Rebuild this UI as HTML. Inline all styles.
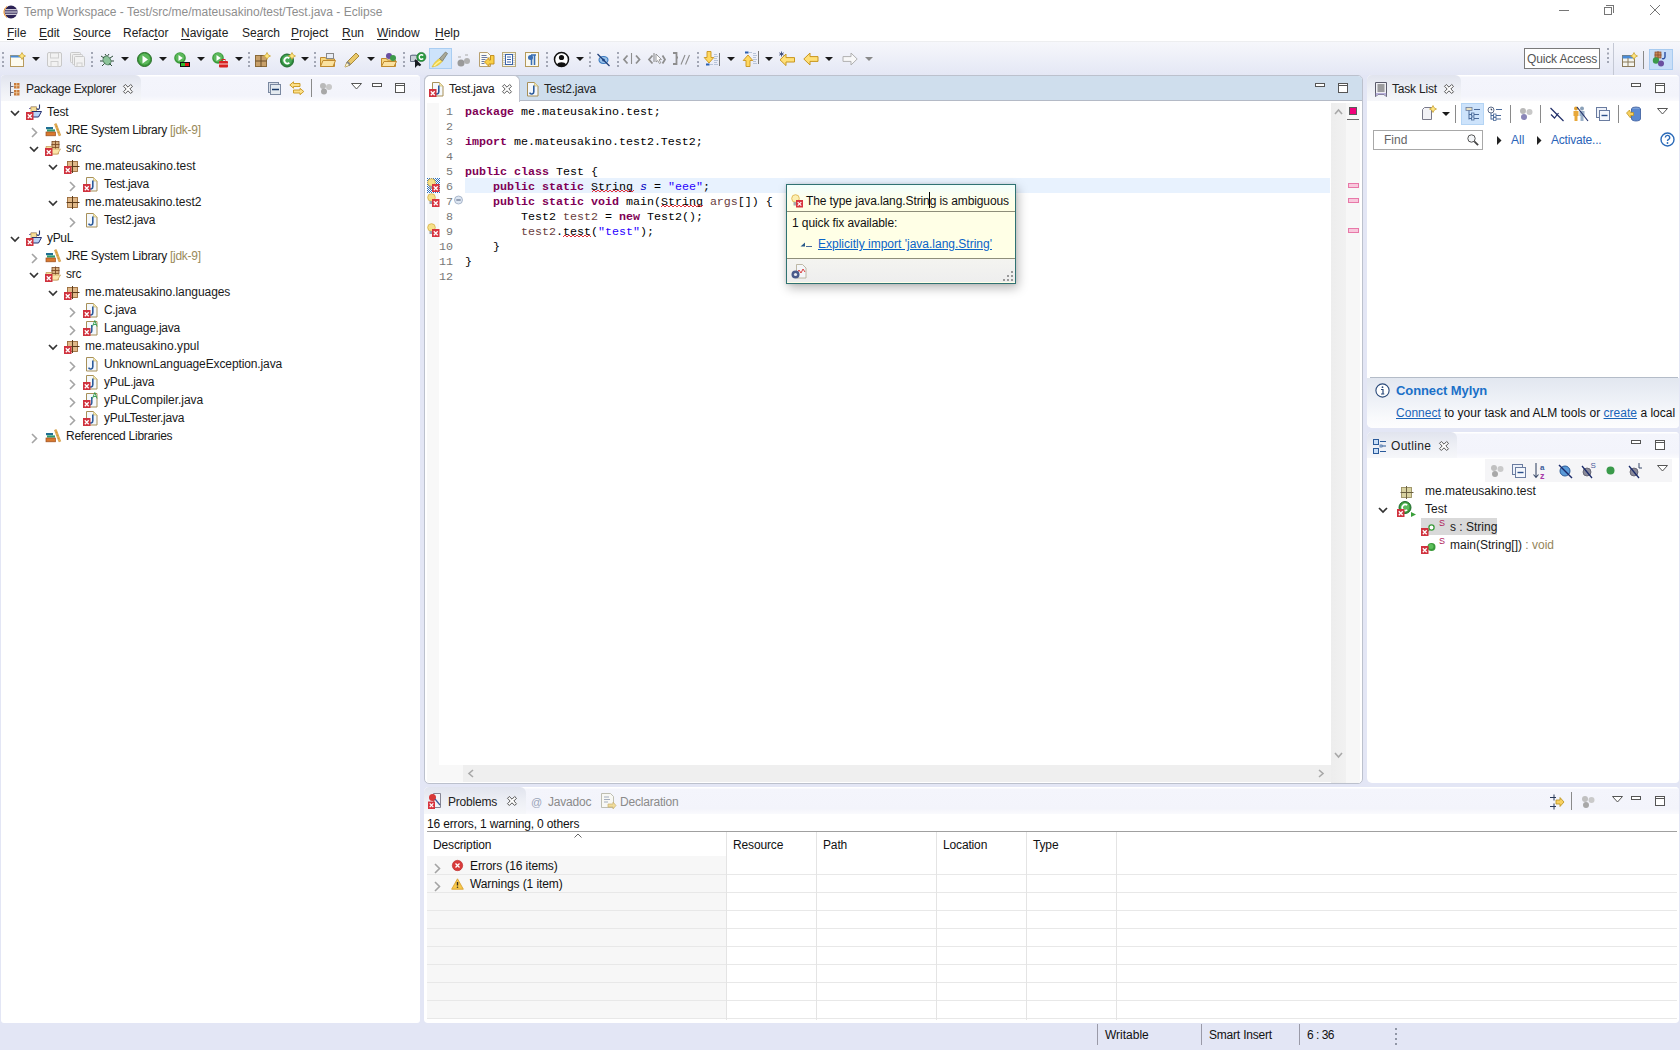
<!DOCTYPE html>
<html><head><meta charset="utf-8">
<style>
html,body{margin:0;padding:0}
body{width:1680px;height:1050px;position:relative;overflow:hidden;background:#E3E6F5;font-family:"Liberation Sans",sans-serif;font-size:12px;color:#000}
.a{position:absolute}
.t{position:absolute;white-space:nowrap;line-height:14px}
.m{font-family:"Liberation Mono",monospace;font-size:11.67px;white-space:pre;position:absolute;line-height:15px}
u{text-decoration:none;border-bottom:1px solid currentColor}
svg{position:absolute;overflow:visible}
</style></head><body>
<!-- TITLE + MENU -->
<div class="a" style="left:0;top:0;width:1680px;height:41px;background:#fff"></div>
<div class="a" style="left:0;top:41px;width:1680px;height:1px;background:#EDEEF0"></div>
<div class="a" style="left:0;top:42px;width:1680px;height:33px;background:linear-gradient(#F6F7FB,#E4E7F5)"></div>
<svg style="left:4px;top:5px" width="14" height="14" viewBox="0 0 14 14"><circle cx="7" cy="7" r="6.5" fill="#2C2255"/><path d="M1.2 4.8h11.6M1 7h12M1.2 9.2h11.6" stroke="#fff" stroke-width="1.1"/><path d="M3 1.5A6.5 6.5 0 0 0 3 12.5" stroke="#F7941E" stroke-width="1" fill="none"/></svg>
<div class="t" style="left:24px;top:5px;color:#8E8E8E;font-size:12px">Temp Workspace - Test/src/me/mateusakino/test/Test.java - Eclipse</div>
<div class="a" style="left:1559px;top:10px;width:10px;height:1px;background:#767676"></div>
<div class="a" style="left:1606px;top:5px;width:7px;height:7px;border-top:1px solid #767676;border-right:1px solid #767676"></div>
<div class="a" style="left:1604px;top:7px;width:6px;height:6px;border:1px solid #767676;background:#fff"></div>
<svg style="left:1650px;top:5px" width="10" height="10"><path d="M0 0L10 10M10 0L0 10" stroke="#767676" stroke-width="1"/></svg>
<div class="t" style="left:7px;top:26px;color:#222"><span style="border-bottom:1px solid #222;line-height:11px;display:inline-block">F</span>ile</div>
<div class="t" style="left:39px;top:26px;color:#222"><span style="border-bottom:1px solid #222;line-height:11px;display:inline-block">E</span>dit</div>
<div class="t" style="left:73px;top:26px;color:#222"><span style="border-bottom:1px solid #222;line-height:11px;display:inline-block">S</span>ource</div>
<div class="t" style="left:123px;top:26px;color:#222">Refac<span style="border-bottom:1px solid #222;line-height:11px;display:inline-block">t</span>or</div>
<div class="t" style="left:181px;top:26px;color:#222"><span style="border-bottom:1px solid #222;line-height:11px;display:inline-block">N</span>avigate</div>
<div class="t" style="left:242px;top:26px;color:#222">Se<span style="border-bottom:1px solid #222;line-height:11px;display:inline-block">a</span>rch</div>
<div class="t" style="left:291px;top:26px;color:#222"><span style="border-bottom:1px solid #222;line-height:11px;display:inline-block">P</span>roject</div>
<div class="t" style="left:342px;top:26px;color:#222"><span style="border-bottom:1px solid #222;line-height:11px;display:inline-block">R</span>un</div>
<div class="t" style="left:377px;top:26px;color:#222"><span style="border-bottom:1px solid #222;line-height:11px;display:inline-block">W</span>indow</div>
<div class="t" style="left:435px;top:26px;color:#222"><span style="border-bottom:1px solid #222;line-height:11px;display:inline-block">H</span>elp</div>
<svg style="left:2px;top:52px" width="2" height="15"><rect x="0" y="0" width="2" height="2" fill="#A2A6B4"/><rect x="0" y="4.5" width="2" height="2" fill="#A2A6B4"/><rect x="0" y="9" width="2" height="2" fill="#A2A6B4"/><rect x="0" y="13" width="2" height="2" fill="#A2A6B4"/></svg>
<svg style="left:10px;top:52px" width="16" height="16" viewBox="0 0 16 16"><rect x="0.5" y="3.5" width="13" height="11" fill="#FDFBF0" stroke="#B89B5E"/><rect x="0.5" y="3.5" width="13" height="2" fill="#4A8BD6"/><path d="M12 0.5l1.2 2.3 2.3 1.2-2.3 1.2L12 7.5l-1.2-2.3-2.3-1.2 2.3-1.2z" fill="#FFE680" stroke="#C9A33A" stroke-width="0.8"/></svg>
<svg style="left:32px;top:57px" width="8" height="4"><path d="M0 0H8L4 4Z" fill="#1a1a1a"/></svg>
<svg style="left:47px;top:52px" width="16" height="16" viewBox="0 0 16 16"><rect x="0.5" y="0.5" width="14" height="14" rx="1.5" fill="#F2F2F2" stroke="#C8C8C8"/><rect x="3.5" y="1" width="8" height="5" fill="none" stroke="#CFCFCF"/><rect x="4" y="9.5" width="7" height="5" fill="none" stroke="#CFCFCF"/></svg>
<svg style="left:70px;top:52px" width="16" height="16" viewBox="0 0 16 16"><rect x="0.5" y="0.5" width="10" height="10" rx="1" fill="#F0F0F0" stroke="#CACACA"/><rect x="2.5" y="2.5" width="10" height="10" rx="1" fill="#F0F0F0" stroke="#CACACA"/><rect x="4.5" y="4.5" width="10" height="10" rx="1" fill="#F2F2F2" stroke="#C8C8C8"/><rect x="7" y="11" width="5" height="3.5" fill="none" stroke="#CFCFCF"/></svg>
<svg style="left:91px;top:52px" width="2" height="15"><rect x="0" y="0" width="2" height="2" fill="#A2A6B4"/><rect x="0" y="4.5" width="2" height="2" fill="#A2A6B4"/><rect x="0" y="9" width="2" height="2" fill="#A2A6B4"/><rect x="0" y="13" width="2" height="2" fill="#A2A6B4"/></svg>
<svg style="left:99px;top:52px" width="16" height="16" viewBox="0 0 16 16"><ellipse cx="8" cy="8.5" rx="3.6" ry="4.6" fill="#8CC49A" stroke="#4E7F5C" transform="rotate(-35 8 8.5)"/><path d="M2 4l3 2M1 9h3M3 14l2.5-2.5M14 4l-3 2M15 9h-3M13 14l-2.5-2.5M6 2l1.5 2M10 2L8.5 4" stroke="#2F4F3A" stroke-width="1"/></svg>
<svg style="left:121px;top:57px" width="8" height="4"><path d="M0 0H8L4 4Z" fill="#1a1a1a"/></svg>
<svg style="left:137px;top:52px" width="16" height="16" viewBox="0 0 16 16"><circle cx="7.5" cy="7.5" r="7" fill="#3A9A3A" stroke="#2A6E2A"/><circle cx="7.5" cy="7" r="5.5" fill="#5CB85C"/><path d="M5.5 3.5L11 7.5 5.5 11.5z" fill="#fff"/></svg>
<svg style="left:159px;top:57px" width="8" height="4"><path d="M0 0H8L4 4Z" fill="#1a1a1a"/></svg>
<svg style="left:174px;top:52px" width="16" height="16" viewBox="0 0 16 16"><circle cx="6" cy="6" r="5.8" fill="#3A9A3A"/><circle cx="6" cy="5.5" r="4.5" fill="#5CB85C"/><path d="M4.5 3L8.8 6 4.5 9z" fill="#fff"/><rect x="6" y="10" width="10" height="5" fill="#111"/><rect x="7" y="11" width="4" height="3" fill="#2DBB2D"/><rect x="11" y="11" width="4" height="3" fill="#D11"/></svg>
<svg style="left:197px;top:57px" width="8" height="4"><path d="M0 0H8L4 4Z" fill="#1a1a1a"/></svg>
<svg style="left:212px;top:52px" width="16" height="16" viewBox="0 0 16 16"><circle cx="6" cy="6" r="5.8" fill="#3A9A3A"/><circle cx="6" cy="5.5" r="4.5" fill="#5CB85C"/><path d="M4.5 3L8.8 6 4.5 9z" fill="#fff"/><rect x="7" y="9" width="9" height="6.5" rx="1" fill="#D82222"/><path d="M7 12h9" stroke="#fff" stroke-width="0.8"/><rect x="10" y="7.5" width="3" height="2" fill="none" stroke="#D82222"/></svg>
<svg style="left:235px;top:57px" width="8" height="4"><path d="M0 0H8L4 4Z" fill="#1a1a1a"/></svg>
<svg style="left:248px;top:52px" width="2" height="15"><rect x="0" y="0" width="2" height="2" fill="#A2A6B4"/><rect x="0" y="4.5" width="2" height="2" fill="#A2A6B4"/><rect x="0" y="9" width="2" height="2" fill="#A2A6B4"/><rect x="0" y="13" width="2" height="2" fill="#A2A6B4"/></svg>
<svg style="left:255px;top:52px" width="16" height="16" viewBox="0 0 16 16"><rect x="0.5" y="3.5" width="11" height="11" fill="#C8A06A" stroke="#8A6A3A"/><path d="M6 3v12M0.5 9h11" stroke="#6B4E2A"/><path d="M12 0.5l1.2 2.3 2.3 1.2-2.3 1.2L12 7.5l-1.2-2.3-2.3-1.2 2.3-1.2z" fill="#FFE680" stroke="#C9A33A" stroke-width="0.8"/></svg>
<svg style="left:280px;top:52px" width="16" height="16" viewBox="0 0 16 16"><circle cx="7" cy="8.5" r="6.5" fill="#2E8B3E" stroke="#1F6A2C"/><circle cx="7" cy="8" r="5" fill="#47A957"/><path d="M9.3 6.2A3 3 0 1 0 9.3 10.8" stroke="#fff" stroke-width="1.8" fill="none"/><path d="M12 0.5l1.2 2.3 2.3 1.2-2.3 1.2L12 7.5l-1.2-2.3-2.3-1.2 2.3-1.2z" fill="#FFE680" stroke="#C9A33A" stroke-width="0.8"/></svg>
<svg style="left:301px;top:57px" width="8" height="4"><path d="M0 0H8L4 4Z" fill="#1a1a1a"/></svg>
<svg style="left:314px;top:52px" width="2" height="15"><rect x="0" y="0" width="2" height="2" fill="#A2A6B4"/><rect x="0" y="4.5" width="2" height="2" fill="#A2A6B4"/><rect x="0" y="9" width="2" height="2" fill="#A2A6B4"/><rect x="0" y="13" width="2" height="2" fill="#A2A6B4"/></svg>
<svg style="left:320px;top:52px" width="16" height="16" viewBox="0 0 16 16"><path d="M0.5 5.5h5l1 1.5h8v7.5h-14z" fill="#F7D77E" stroke="#C08A2E"/><rect x="6.5" y="1.5" width="7" height="5" fill="#E8ECF4" stroke="#888"/><path d="M0.5 14.5L3 8.5h12.5L13 14.5z" fill="#FBE2A0" stroke="#C08A2E"/></svg>
<svg style="left:344px;top:52px" width="16" height="16" viewBox="0 0 16 16"><path d="M1 15l2-5 9-9 3 3-9 9z" fill="#E9C86A" stroke="#A8893A"/><path d="M3 10l3 3" stroke="#888" stroke-width="2.5"/><path d="M1 15l2-4 2 2z" fill="#FFF8D0"/></svg>
<svg style="left:367px;top:57px" width="8" height="4"><path d="M0 0H8L4 4Z" fill="#1a1a1a"/></svg>
<svg style="left:381px;top:52px" width="16" height="16" viewBox="0 0 16 16"><path d="M0.5 6.5h5l1 1.5h8v6.5h-14z" fill="#F7D77E" stroke="#C08A2E"/><path d="M0.5 14.5L3 9.5h12.5L13 14.5z" fill="#FBE2A0" stroke="#C08A2E"/><circle cx="8" cy="4" r="3" fill="#6A4FA0"/><circle cx="12" cy="6" r="3" fill="#3C9A4A"/></svg>
<svg style="left:403px;top:52px" width="2" height="15"><rect x="0" y="0" width="2" height="2" fill="#A2A6B4"/><rect x="0" y="4.5" width="2" height="2" fill="#A2A6B4"/><rect x="0" y="9" width="2" height="2" fill="#A2A6B4"/><rect x="0" y="13" width="2" height="2" fill="#A2A6B4"/></svg>
<svg style="left:410px;top:52px" width="16" height="16" viewBox="0 0 16 16"><path d="M0.5 3.5h7v6h-7z" fill="#C8CED8" stroke="#6A7488"/><path d="M1.5 2.5h5v1h-5z" fill="#8A94A8"/><path d="M5 7.5v8.5l2.3-2.6 3.2-0.2z" fill="#151A20"/><path d="M5 8l5.5 5.5" stroke="#151A20" stroke-width="2.2"/><circle cx="11.3" cy="5" r="4.6" fill="#2A9A40" stroke="#1F6A2C" stroke-width="0.6"/><path d="M13.2 3.4A2.3 2.3 0 1 0 13.2 6.6" stroke="#fff" stroke-width="1.4" fill="none"/></svg>
<div class="a" style="left:429px;top:48px;width:21px;height:19px;background:#CDE3FB;border:1px solid #A9CDF2"></div>
<svg style="left:431px;top:51px" width="18" height="17" viewBox="0 0 18 17"><path d="M1 16c1.5-3 3.5-6 7.5-8.5l3 2.5c-2.5 3.5-6 5.5-10.5 6z" fill="#F2D64A" stroke="#D8B830" stroke-width="0.6"/><path d="M3 15c2-2 4-4 6.5-5" stroke="#FFF2A0" stroke-width="1.2" fill="none"/><path d="M8.5 7.5L14.5 1l2 1.5-5 7.5z" fill="#A8A898" stroke="#707062" stroke-width="0.7"/></svg>
<svg style="left:457px;top:52px" width="16" height="16" viewBox="0 0 16 16"><circle cx="4" cy="11" r="3.5" fill="#9A9A9A"/><circle cx="10" cy="9" r="3" fill="#B0B0B0"/><path d="M1 5h3M8 3h3" stroke="#AAA"/></svg>
<svg style="left:479px;top:52px" width="16" height="16" viewBox="0 0 16 16"><path d="M0.5 0.5h8l3 3v11h-11z" fill="#FBFBF4" stroke="#B8A070"/><path d="M2.5 3.5h5M2.5 5.5h6M2.5 7.5h4M2.5 9.5h3M2.5 11.5h3" stroke="#5A6A98" stroke-width="0.9"/><path d="M11.5 3.5h3.5v8.5H10v2.5L5.5 10 10 5.5V8h1.5z" fill="#FAD048" stroke="#C08A1A" stroke-width="0.9"/></svg>
<svg style="left:502px;top:52px" width="16" height="16" viewBox="0 0 16 16"><rect x="0.5" y="0.5" width="13" height="14" fill="#F6F6EC" stroke="#B8A878"/><path d="M2 2v11M12 2v11" stroke="#A8A8A8" stroke-dasharray="1 1"/><rect x="3.5" y="2.5" width="7" height="10" fill="#fff" stroke="#3A62A8"/><path d="M5 5h4M5 7.5h4M5 10h4" stroke="#3A62A8"/></svg>
<svg style="left:525px;top:52px" width="16" height="16" viewBox="0 0 16 16"><rect x="0.5" y="0.5" width="13" height="14" fill="#FAF9F0" stroke="#B59A5A"/><path d="M6 3h5M6.5 3v10M9.5 3v10" stroke="#3A6FB5" stroke-width="1.6"/><circle cx="5.5" cy="5.5" r="2.5" fill="#3A6FB5"/></svg>
<svg style="left:546px;top:52px" width="2" height="15"><rect x="0" y="0" width="2" height="2" fill="#A2A6B4"/><rect x="0" y="4.5" width="2" height="2" fill="#A2A6B4"/><rect x="0" y="9" width="2" height="2" fill="#A2A6B4"/><rect x="0" y="13" width="2" height="2" fill="#A2A6B4"/></svg>
<svg style="left:554px;top:52px" width="16" height="16" viewBox="0 0 16 16"><circle cx="7.5" cy="7.5" r="7" fill="#fff" stroke="#111" stroke-width="1.5"/><circle cx="7.5" cy="5.5" r="2.6" fill="#111"/><path d="M3 12.5c1-3 8-3 9 0a6 6 0 0 1-9 0z" fill="#111"/></svg>
<svg style="left:576px;top:57px" width="8" height="4"><path d="M0 0H8L4 4Z" fill="#1a1a1a"/></svg>
<svg style="left:589px;top:52px" width="2" height="15"><rect x="0" y="0" width="2" height="2" fill="#A2A6B4"/><rect x="0" y="4.5" width="2" height="2" fill="#A2A6B4"/><rect x="0" y="9" width="2" height="2" fill="#A2A6B4"/><rect x="0" y="13" width="2" height="2" fill="#A2A6B4"/></svg>
<svg style="left:597px;top:52px" width="16" height="16" viewBox="0 0 16 16"><ellipse cx="6.5" cy="8" rx="4.5" ry="3.5" fill="#9CC4EA" stroke="#3A7AC0" stroke-width="1.1"/><circle cx="6.5" cy="8" r="1.5" fill="#2A5AA0"/><path d="M0.5 2L12.5 14" stroke="#1E3E78" stroke-width="1.2"/></svg>
<svg style="left:617px;top:52px" width="2" height="15"><rect x="0" y="0" width="2" height="2" fill="#A2A6B4"/><rect x="0" y="4.5" width="2" height="2" fill="#A2A6B4"/><rect x="0" y="9" width="2" height="2" fill="#A2A6B4"/><rect x="0" y="13" width="2" height="2" fill="#A2A6B4"/></svg>
<svg style="left:622px;top:52px" width="19" height="13" viewBox="0 0 19 13"><path d="M5.5 3.5L2 7.5 5.5 11.5" stroke="#8E8E8E" stroke-width="1.8" fill="none"/><path d="M9.5 1v11" stroke="#8E8E8E" stroke-width="1.1"/><path d="M14 3.5l3.5 4-3.5 4" stroke="#8E8E8E" stroke-width="1.8" fill="none"/></svg>
<svg style="left:647px;top:52px" width="19" height="14" viewBox="0 0 19 14"><path d="M5.5 3.5L2 7.5 5.5 11.5" stroke="#8E8E8E" stroke-width="1.8" fill="none"/><path d="M7 1v9" stroke="#8E8E8E" stroke-width="1.1"/><path d="M9 2l5.5 5.5-2.5 0.3 1.8 3-1.3.8-1.8-3L9 10z" fill="#fff" stroke="#8E8E8E" stroke-width="0.9"/><path d="M15.5 3.5l2.5 4-2.5 4" stroke="#8E8E8E" stroke-width="1.8" fill="none"/></svg>
<svg style="left:672px;top:52px" width="19" height="14" viewBox="0 0 19 14"><path d="M1 1h3.5v4.5h1.5M4.5 5.5v6.5H1" stroke="#8E8E8E" stroke-width="1.8" fill="none"/><path d="M9 12.5L13 3M13.5 12.5L17.5 3" stroke="#8E8E8E" stroke-width="1.1"/></svg>
<svg style="left:697px;top:52px" width="2" height="15"><rect x="0" y="0" width="2" height="2" fill="#A2A6B4"/><rect x="0" y="4.5" width="2" height="2" fill="#A2A6B4"/><rect x="0" y="9" width="2" height="2" fill="#A2A6B4"/><rect x="0" y="13" width="2" height="2" fill="#A2A6B4"/></svg>
<svg style="left:704px;top:51px" width="17" height="17" viewBox="0 0 17 17"><path d="M10 3.5h3M10 5.5h4M10 7.5h3M10 9.5h4M10 11.5h3M10 13.5h4" stroke="#B8C4D8" stroke-width="1"/><path d="M15.5 2v13" stroke="#7A7A7A" stroke-width="1"/><path d="M3 0.5h4v6h2.8L5 12 0.2 6.5H3z" fill="#FFD860" stroke="#C8941E" stroke-width="0.9"/><rect x="2" y="12.5" width="3.5" height="2" fill="#2A5FAF"/><path d="M6 13.5h3" stroke="#B8C4D8"/></svg>
<svg style="left:727px;top:57px" width="8" height="4"><path d="M0 0H8L4 4Z" fill="#1a1a1a"/></svg>
<svg style="left:743px;top:50px" width="17" height="17" viewBox="0 0 17 17"><path d="M10 3.5h3M10 5.5h4M10 7.5h3M10 9.5h4M10 11.5h3M10 13.5h4" stroke="#B8C4D8" stroke-width="1"/><path d="M15.5 1v13" stroke="#7A7A7A" stroke-width="1"/><path d="M3 16.5h4v-6h2.8L5 5 0.2 10.5H3z" fill="#FFD860" stroke="#C8941E" stroke-width="0.9"/><rect x="2" y="1.5" width="3.5" height="2" fill="#2A5FAF"/><path d="M6 2.5h3" stroke="#B8C4D8"/></svg>
<svg style="left:765px;top:57px" width="8" height="4"><path d="M0 0H8L4 4Z" fill="#1a1a1a"/></svg>
<svg style="left:779px;top:51px" width="17" height="16" viewBox="0 0 17 16"><path d="M7 3L1 8.8l6 5.8v-3.6h8.5V6.6H7z" fill="#FFE078" stroke="#C8961E" stroke-width="1"/><path d="M2.5 0.5v5M0.3 1.8l4.4 2.4M0.3 4.2l4.4-2.4" stroke="#3A4A78" stroke-width="0.9"/></svg>
<svg style="left:803px;top:51px" width="17" height="16" viewBox="0 0 17 16"><path d="M7 2L0.8 8l6.2 6v-3.6h8V5.6h-8z" fill="#FFE078" stroke="#C8961E" stroke-width="1"/></svg>
<svg style="left:825px;top:57px" width="8" height="4"><path d="M0 0H8L4 4Z" fill="#1a1a1a"/></svg>
<svg style="left:842px;top:51px" width="17" height="16" viewBox="0 0 17 16"><path d="M9 2L15.2 8 9 14v-3.6H1V5.6h8z" fill="#F8F8F8" stroke="#B0B0B0" stroke-width="1"/></svg>
<svg style="left:865px;top:57px" width="8" height="4"><path d="M0 0H8L4 4Z" fill="#8A8A8A"/></svg>
<div class="a" style="left:1524px;top:48px;width:74px;height:19px;border:1px solid #7A7A7A;background:#fff"></div>
<div class="t" style="left:1527px;top:52px;color:#555;font-size:12px;letter-spacing:-0.15px">Quick Access</div>
<svg style="left:1607px;top:48px" width="2" height="15"><rect x="0" y="0" width="2" height="2" fill="#A2A6B4"/><rect x="0" y="4.5" width="2" height="2" fill="#A2A6B4"/><rect x="0" y="9" width="2" height="2" fill="#A2A6B4"/><rect x="0" y="13" width="2" height="2" fill="#A2A6B4"/></svg>
<div class="a" style="left:1613px;top:43px;width:1px;height:32px;background:#C4C8D4"></div>
<svg style="left:1622px;top:52px" width="16" height="16" viewBox="0 0 16 16"><rect x="0.5" y="3.5" width="12" height="11" fill="#F4F4EE" stroke="#8A7A5A"/><rect x="0.5" y="3.5" width="12" height="3" fill="#4A8BD6"/><path d="M0.5 10h12M6 6v8.5" stroke="#8A7A5A"/><path d="M12 0.5l1.2 2.3 2.3 1.2-2.3 1.2L12 7.5l-1.2-2.3-2.3-1.2 2.3-1.2z" fill="#FFE680" stroke="#C9A33A" stroke-width="0.8"/></svg>
<div class="a" style="left:1643px;top:51px;width:1px;height:18px;background:#8A8A8A"></div>
<div class="a" style="left:1649px;top:49px;width:22px;height:19px;background:#C8DEF8;border:1px solid #A8CBF0"></div>
<svg style="left:1652px;top:51px" width="16" height="16" viewBox="0 0 16 16"><rect x="3" y="1" width="6" height="6" fill="#C88A5A" stroke="#8A4A2A" stroke-width="0.7"/><path d="M6 0v8M2.5 4h7" stroke="#8A4A2A" stroke-width="0.8"/><path d="M13 1v5a2 2 0 0 1-3 1.5" stroke="#2A4FA0" stroke-width="1.4" fill="none"/><circle cx="4" cy="9.5" r="3.2" fill="#3C9A4A"/><circle cx="9" cy="12.5" r="3" fill="#6A4FA0"/></svg>
<div class="a" style="left:1px;top:75px;width:419px;height:948px;background:#fff;border-radius:4px 4px 3px 3px"></div>
<div class="a" style="left:1px;top:75px;width:419px;height:26px;background:linear-gradient(#FFFFFF 0,#FFFFFF 1px,#F4F5FC 2px,#F3F4FB 80%,#FAFAFD);border-radius:4px 4px 0 0"></div>
<div class="a" style="left:1px;top:75px;width:140px;height:26px;background:linear-gradient(#E1E4EE,#EDEFF5 50%,#F6F7FA);border-radius:4px 6px 0 0"></div>
<svg style="left:10px;top:82px" width="10" height="14" viewBox="0 0 10 14"><path d="M0.5 0v14" stroke="#6A6A78"/><path d="M0.5 4.5h3M0.5 10.5h3" stroke="#6A6A78"/><rect x="4" y="1" width="5.5" height="5.5" fill="#C87A3A"/><rect x="4" y="8" width="5.5" height="5.5" fill="#C87A3A"/><path d="M6.7 1v5.5M4 3.7h5.5M6.7 8v5.5M4 10.7h5.5" stroke="#F3D8B0" stroke-width="0.7"/></svg>
<div class="t" style="left:26px;top:82px;color:#222;letter-spacing:-0.3px">Package Explorer</div>
<svg style="left:123px;top:84px" width="10" height="10" viewBox="0 0 10 10"><path d="M0.5 2.3L2.3 0.5 5 3.2 7.7 0.5 9.5 2.3 6.8 5 9.5 7.7 7.7 9.5 5 6.8 2.3 9.5 0.5 7.7 3.2 5z" fill="#fff" stroke="#555" stroke-width="1" stroke-linejoin="miter"/></svg>
<svg style="left:268px;top:82px" width="14" height="14" viewBox="0 0 14 14"><rect x="0.5" y="0.5" width="10" height="10" fill="#D8DEE8" stroke="#7A88A0"/><rect x="2.5" y="2.5" width="10" height="10" fill="#E4EAF0" stroke="#7A88A0"/><path d="M4 7.5h7" stroke="#1A3A6A" stroke-width="1.5"/></svg>
<svg style="left:289px;top:81px" width="16" height="16" viewBox="0 0 16 16"><path d="M4.5 0.8L0.8 4 4.5 7.2V5.5h6.5v-3H4.5z" fill="#FCE08A" stroke="#C8961E" stroke-width="0.9"/><path d="M11 7.3l3.8 3.2-3.8 3.2V12H4.5V9H11z" fill="#FCE08A" stroke="#C8961E" stroke-width="0.9"/></svg>
<div class="a" style="left:311px;top:79px;width:1px;height:18px;background:#8A8A8A"></div>
<svg style="left:319px;top:82px" width="14" height="13" viewBox="0 0 14 13"><circle cx="4" cy="4" r="3" fill="#B9B9B9"/><circle cx="10" cy="5" r="3" fill="#C8C8C8"/><circle cx="5" cy="9.5" r="3" fill="#A8A8A8"/></svg>
<svg style="left:351px;top:83px" width="11" height="7"><path d="M0.5 0.5h10L5.5 6z" fill="#fff" stroke="#555"/></svg>
<div class="a" style="left:372px;top:83px;width:8px;height:2px;border:1px solid #555;background:#fff"></div>
<div class="a" style="left:395px;top:83px;width:8px;height:8px;border:1px solid #555;background:#fff"></div>
<div class="a" style="left:396px;top:85px;width:8px;height:1px;background:#555"></div>
<div class="a" style="left:424px;top:75px;width:937px;height:707px;background:#fff;border:1px solid #BCC1CD;border-radius:5px 5px 5px 5px"></div>
<div class="a" style="left:425px;top:76px;width:937px;height:24px;background:#CFDEED;border-bottom:1px solid #B4BAC6;border-radius:4px 4px 0 0"></div>
<div class="a" style="left:424px;top:75px;width:94px;height:26px;background:#fff;border:1px solid #BCC1CD;border-bottom:none;border-radius:6px 6px 0 0"></div>
<div class="a" style="left:1315px;top:83px;width:8px;height:2px;border:1px solid #555;background:#fff"></div>
<div class="a" style="left:1338px;top:83px;width:8px;height:8px;border:1px solid #555;background:#fff"></div>
<div class="a" style="left:1339px;top:85px;width:8px;height:1px;background:#555"></div>
<div class="a" style="left:1367px;top:75px;width:312px;height:353px;background:#fff;border-radius:5px 4px 4px 5px"></div>
<div class="a" style="left:1367px;top:75px;width:312px;height:26px;background:linear-gradient(#FFFFFF 0,#FFFFFF 1px,#F4F5FC 2px,#F3F4FB 80%,#FAFAFD);border-radius:5px 4px 0 0"></div>
<div class="a" style="left:1367px;top:75px;width:94px;height:26px;background:linear-gradient(#E1E4EE,#EDEFF5 50%,#F6F7FA);border-radius:5px 6px 0 0"></div>
<div class="a" style="left:1631px;top:83px;width:8px;height:2px;border:1px solid #555;background:#fff"></div>
<div class="a" style="left:1655px;top:83px;width:8px;height:8px;border:1px solid #555;background:#fff"></div>
<div class="a" style="left:1656px;top:85px;width:8px;height:1px;background:#555"></div>
<div class="a" style="left:1367px;top:432px;width:312px;height:351px;background:#fff;border-radius:5px 4px 4px 5px"></div>
<div class="a" style="left:1367px;top:432px;width:312px;height:26px;background:linear-gradient(#FFFFFF 0,#FFFFFF 1px,#F4F5FC 2px,#F3F4FB 80%,#FAFAFD);border-radius:5px 4px 0 0"></div>
<div class="a" style="left:1367px;top:432px;width:90px;height:26px;background:linear-gradient(#E1E4EE,#EDEFF5 50%,#F6F7FA);border-radius:5px 6px 0 0"></div>
<div class="a" style="left:1631px;top:440px;width:8px;height:2px;border:1px solid #555;background:#fff"></div>
<div class="a" style="left:1655px;top:440px;width:8px;height:8px;border:1px solid #555;background:#fff"></div>
<div class="a" style="left:1656px;top:442px;width:8px;height:1px;background:#555"></div>
<div class="a" style="left:424px;top:787px;width:1255px;height:236px;background:#fff;border-radius:5px 4px 4px 4px"></div>
<div class="a" style="left:424px;top:787px;width:1255px;height:27px;background:linear-gradient(#FFFFFF 0,#FFFFFF 1px,#F4F5FC 2px,#F3F4FB 80%,#FAFAFD);border-radius:5px 4px 0 0"></div>
<div class="a" style="left:424px;top:787px;width:102px;height:27px;background:linear-gradient(#E1E4EE,#EDEFF5 50%,#F6F7FA);border-radius:5px 6px 0 0"></div>
<div class="a" style="left:1631px;top:796px;width:8px;height:2px;border:1px solid #555;background:#fff"></div>
<div class="a" style="left:1655px;top:796px;width:8px;height:8px;border:1px solid #555;background:#fff"></div>
<div class="a" style="left:1656px;top:798px;width:8px;height:1px;background:#555"></div>
<svg style="left:10px;top:110px" width="10" height="7" viewBox="0 0 10 7"><path d="M1 1l4 4 4-4" stroke="#333" stroke-width="1.7" fill="none"/></svg>
<svg style="left:26px;top:104px" width="16" height="16" viewBox="0 0 16 16"><path d="M3 4.5h2v-1.5h5.5v1.5h1" stroke="#6A5FA0" stroke-width="0.9" fill="none"/><rect x="5" y="3" width="5.5" height="5" fill="#F6DE9A" stroke="#C9A85A" stroke-width="0.8"/><path d="M6 7.5h9.5L12.5 13H6z" fill="#B8D4F8" stroke="#26306E" stroke-width="1"/><path d="M13.5 0.5v3.5a1.6 1.6 0 0 1-3 .5" stroke="#2A3A6E" stroke-width="1.1" fill="none"/><rect x="0" y="8" width="7.5" height="8" fill="#D0323E"/><path d="M1.8 10.3l3.9 3.9M5.7 10.3l-3.9 3.9" stroke="#fff" stroke-width="1.3"/></svg>
<div class="t" style="left:47px;top:104.5px;color:#1a1a1a;letter-spacing:-0.104px">Test</div>
<svg style="left:31px;top:127px" width="7" height="11" viewBox="0 0 7 11"><path d="M1 1l4.5 4.5L1 10" stroke="#A4A4A4" stroke-width="1.6" fill="none"/></svg>
<svg style="left:45px;top:122px" width="16" height="16" viewBox="0 0 16 16"><rect x="1" y="5" width="7" height="2.2" fill="#1F6F92"/><rect x="2" y="7.4" width="8" height="2.2" fill="#2F9A6E"/><rect x="1" y="10" width="9.5" height="3.8" fill="#D8782E" stroke="#9A4E1E" stroke-width="0.7"/><path d="M9.5 2.2l1.8-0.6 4.4 11.6-1.8 0.6z" fill="#EDB65A" stroke="#C88A2A" stroke-width="0.6"/><path d="M11 4.5l1.2-0.4M12 7.5l1.2-0.4M13 10.5l1.2-0.4" stroke="#B87A20" stroke-width="0.6"/></svg>
<div class="t" style="left:66px;top:122.5px;color:#1a1a1a;letter-spacing:-0.283px">JRE System Library<span style="color:#9A8A5A"> [jdk-9]</span></div>
<svg style="left:29px;top:146px" width="10" height="7" viewBox="0 0 10 7"><path d="M1 1l4 4 4-4" stroke="#333" stroke-width="1.7" fill="none"/></svg>
<svg style="left:45px;top:140px" width="16" height="16" viewBox="0 0 16 16"><path d="M1 6.5h5l1-1h6.5v8.5H1z" fill="#F6DE9A" stroke="#C9A060" stroke-width="0.8"/><path d="M1 14L4 9h11.5l-3 5z" fill="#FBE6A8" stroke="#C9A060" stroke-width="0.8"/><rect x="7" y="1.5" width="7" height="6" fill="#D8B080" stroke="#7A4A24" stroke-width="0.8"/><path d="M10.5 0.5v8M6.5 4.5h8" stroke="#7A4A24" stroke-width="0.9"/><rect x="0" y="8" width="7.5" height="8" fill="#D0323E"/><path d="M1.8 10.3l3.9 3.9M5.7 10.3l-3.9 3.9" stroke="#fff" stroke-width="1.3"/></svg>
<div class="t" style="left:66px;top:140.5px;color:#1a1a1a;letter-spacing:-0.300px">src</div>
<svg style="left:48px;top:164px" width="10" height="7" viewBox="0 0 10 7"><path d="M1 1l4 4 4-4" stroke="#333" stroke-width="1.7" fill="none"/></svg>
<svg style="left:64px;top:158px" width="16" height="16" viewBox="0 0 16 16"><rect x="3.5" y="3.5" width="10" height="10" fill="#E0B888" stroke="#9A6A3A" stroke-width="0.9"/><path d="M8.5 2v13M2.5 8.5h13" stroke="#5A3A1A" stroke-width="1"/><rect x="0" y="8" width="7.5" height="8" fill="#D0323E"/><path d="M1.8 10.3l3.9 3.9M5.7 10.3l-3.9 3.9" stroke="#fff" stroke-width="1.3"/></svg>
<div class="t" style="left:85px;top:158.5px;color:#1a1a1a;letter-spacing:-0.012px">me.mateusakino.test</div>
<svg style="left:69px;top:181px" width="7" height="11" viewBox="0 0 7 11"><path d="M1 1l4.5 4.5L1 10" stroke="#A4A4A4" stroke-width="1.6" fill="none"/></svg>
<svg style="left:83px;top:176px" width="16" height="16" viewBox="0 0 16 16"><path d="M3.5 1.5h7l3.5 3.5v10h-10.5z" fill="#F4F8FC" stroke="#A89058" stroke-width="1"/><path d="M10.5 1.5v3.5h3.5" fill="#F2E6B0" stroke="#C8B870" stroke-width="0.7"/><path d="M9.8 4.5v6.2a2.2 2.2 0 0 1-4.2 1" stroke="#2C5A9A" stroke-width="1.6" fill="none"/><rect x="0" y="8" width="7.5" height="8" fill="#D0323E"/><path d="M1.8 10.3l3.9 3.9M5.7 10.3l-3.9 3.9" stroke="#fff" stroke-width="1.3"/></svg>
<div class="t" style="left:104px;top:176.5px;color:#1a1a1a;letter-spacing:-0.273px">Test.java</div>
<svg style="left:48px;top:200px" width="10" height="7" viewBox="0 0 10 7"><path d="M1 1l4 4 4-4" stroke="#333" stroke-width="1.7" fill="none"/></svg>
<svg style="left:64px;top:194px" width="16" height="16" viewBox="0 0 16 16"><rect x="3.5" y="3.5" width="10" height="10" fill="#E0B888" stroke="#9A6A3A" stroke-width="0.9"/><path d="M8.5 2v13M2.5 8.5h13" stroke="#5A3A1A" stroke-width="1"/></svg>
<div class="t" style="left:85px;top:194.5px;color:#1a1a1a;letter-spacing:-0.055px">me.mateusakino.test2</div>
<svg style="left:69px;top:217px" width="7" height="11" viewBox="0 0 7 11"><path d="M1 1l4.5 4.5L1 10" stroke="#A4A4A4" stroke-width="1.6" fill="none"/></svg>
<svg style="left:83px;top:212px" width="16" height="16" viewBox="0 0 16 16"><path d="M3.5 1.5h7l3.5 3.5v10h-10.5z" fill="#F4F8FC" stroke="#A89058" stroke-width="1"/><path d="M10.5 1.5v3.5h3.5" fill="#F2E6B0" stroke="#C8B870" stroke-width="0.7"/><path d="M9.8 4.5v6.2a2.2 2.2 0 0 1-4.2 1" stroke="#2C5A9A" stroke-width="1.6" fill="none"/></svg>
<div class="t" style="left:104px;top:212.5px;color:#1a1a1a;letter-spacing:-0.283px">Test2.java</div>
<svg style="left:10px;top:236px" width="10" height="7" viewBox="0 0 10 7"><path d="M1 1l4 4 4-4" stroke="#333" stroke-width="1.7" fill="none"/></svg>
<svg style="left:26px;top:230px" width="16" height="16" viewBox="0 0 16 16"><path d="M3 4.5h2v-1.5h5.5v1.5h1" stroke="#6A5FA0" stroke-width="0.9" fill="none"/><rect x="5" y="3" width="5.5" height="5" fill="#F6DE9A" stroke="#C9A85A" stroke-width="0.8"/><path d="M6 7.5h9.5L12.5 13H6z" fill="#B8D4F8" stroke="#26306E" stroke-width="1"/><path d="M13.5 0.5v3.5a1.6 1.6 0 0 1-3 .5" stroke="#2A3A6E" stroke-width="1.1" fill="none"/><rect x="0" y="8" width="7.5" height="8" fill="#D0323E"/><path d="M1.8 10.3l3.9 3.9M5.7 10.3l-3.9 3.9" stroke="#fff" stroke-width="1.3"/></svg>
<div class="t" style="left:47px;top:230.5px;color:#1a1a1a;letter-spacing:-0.340px">yPuL</div>
<svg style="left:31px;top:253px" width="7" height="11" viewBox="0 0 7 11"><path d="M1 1l4.5 4.5L1 10" stroke="#A4A4A4" stroke-width="1.6" fill="none"/></svg>
<svg style="left:45px;top:248px" width="16" height="16" viewBox="0 0 16 16"><rect x="1" y="5" width="7" height="2.2" fill="#1F6F92"/><rect x="2" y="7.4" width="8" height="2.2" fill="#2F9A6E"/><rect x="1" y="10" width="9.5" height="3.8" fill="#D8782E" stroke="#9A4E1E" stroke-width="0.7"/><path d="M9.5 2.2l1.8-0.6 4.4 11.6-1.8 0.6z" fill="#EDB65A" stroke="#C88A2A" stroke-width="0.6"/><path d="M11 4.5l1.2-0.4M12 7.5l1.2-0.4M13 10.5l1.2-0.4" stroke="#B87A20" stroke-width="0.6"/></svg>
<div class="t" style="left:66px;top:248.5px;color:#1a1a1a;letter-spacing:-0.283px">JRE System Library<span style="color:#9A8A5A"> [jdk-9]</span></div>
<svg style="left:29px;top:272px" width="10" height="7" viewBox="0 0 10 7"><path d="M1 1l4 4 4-4" stroke="#333" stroke-width="1.7" fill="none"/></svg>
<svg style="left:45px;top:266px" width="16" height="16" viewBox="0 0 16 16"><path d="M1 6.5h5l1-1h6.5v8.5H1z" fill="#F6DE9A" stroke="#C9A060" stroke-width="0.8"/><path d="M1 14L4 9h11.5l-3 5z" fill="#FBE6A8" stroke="#C9A060" stroke-width="0.8"/><rect x="7" y="1.5" width="7" height="6" fill="#D8B080" stroke="#7A4A24" stroke-width="0.8"/><path d="M10.5 0.5v8M6.5 4.5h8" stroke="#7A4A24" stroke-width="0.9"/><rect x="0" y="8" width="7.5" height="8" fill="#D0323E"/><path d="M1.8 10.3l3.9 3.9M5.7 10.3l-3.9 3.9" stroke="#fff" stroke-width="1.3"/></svg>
<div class="t" style="left:66px;top:266.5px;color:#1a1a1a;letter-spacing:-0.300px">src</div>
<svg style="left:48px;top:290px" width="10" height="7" viewBox="0 0 10 7"><path d="M1 1l4 4 4-4" stroke="#333" stroke-width="1.7" fill="none"/></svg>
<svg style="left:64px;top:284px" width="16" height="16" viewBox="0 0 16 16"><rect x="3.5" y="3.5" width="10" height="10" fill="#E0B888" stroke="#9A6A3A" stroke-width="0.9"/><path d="M8.5 2v13M2.5 8.5h13" stroke="#5A3A1A" stroke-width="1"/><rect x="0" y="8" width="7.5" height="8" fill="#D0323E"/><path d="M1.8 10.3l3.9 3.9M5.7 10.3l-3.9 3.9" stroke="#fff" stroke-width="1.3"/></svg>
<div class="t" style="left:85px;top:284.5px;color:#1a1a1a;letter-spacing:-0.061px">me.mateusakino.languages</div>
<svg style="left:69px;top:307px" width="7" height="11" viewBox="0 0 7 11"><path d="M1 1l4.5 4.5L1 10" stroke="#A4A4A4" stroke-width="1.6" fill="none"/></svg>
<svg style="left:83px;top:302px" width="16" height="16" viewBox="0 0 16 16"><path d="M3.5 1.5h7l3.5 3.5v10h-10.5z" fill="#F4F8FC" stroke="#A89058" stroke-width="1"/><path d="M10.5 1.5v3.5h3.5" fill="#F2E6B0" stroke="#C8B870" stroke-width="0.7"/><path d="M9.8 4.5v6.2a2.2 2.2 0 0 1-4.2 1" stroke="#2C5A9A" stroke-width="1.6" fill="none"/><rect x="0" y="8" width="7.5" height="8" fill="#D0323E"/><path d="M1.8 10.3l3.9 3.9M5.7 10.3l-3.9 3.9" stroke="#fff" stroke-width="1.3"/></svg>
<div class="t" style="left:104px;top:302.5px;color:#1a1a1a;letter-spacing:-0.319px">C.java</div>
<svg style="left:69px;top:325px" width="7" height="11" viewBox="0 0 7 11"><path d="M1 1l4.5 4.5L1 10" stroke="#A4A4A4" stroke-width="1.6" fill="none"/></svg>
<svg style="left:83px;top:320px" width="16" height="16" viewBox="0 0 16 16"><path d="M3.5 1.5h10.5v13.5h-10.5z" fill="#F4F8FC" stroke="#A89058" stroke-width="1"/><path d="M8.8 5v5.7a2 2 0 0 1-3.8 1" stroke="#2C5A9A" stroke-width="1.5" fill="none"/><path d="M9.5 6.5L11.8 0.5 14 6.5M10.3 4.5h3" stroke="#2E9A4A" stroke-width="0.9" fill="none"/><rect x="0" y="8" width="7.5" height="8" fill="#D0323E"/><path d="M1.8 10.3l3.9 3.9M5.7 10.3l-3.9 3.9" stroke="#fff" stroke-width="1.3"/></svg>
<div class="t" style="left:104px;top:320.5px;color:#1a1a1a;letter-spacing:-0.204px">Language.java</div>
<svg style="left:48px;top:344px" width="10" height="7" viewBox="0 0 10 7"><path d="M1 1l4 4 4-4" stroke="#333" stroke-width="1.7" fill="none"/></svg>
<svg style="left:64px;top:338px" width="16" height="16" viewBox="0 0 16 16"><rect x="3.5" y="3.5" width="10" height="10" fill="#E0B888" stroke="#9A6A3A" stroke-width="0.9"/><path d="M8.5 2v13M2.5 8.5h13" stroke="#5A3A1A" stroke-width="1"/><rect x="0" y="8" width="7.5" height="8" fill="#D0323E"/><path d="M1.8 10.3l3.9 3.9M5.7 10.3l-3.9 3.9" stroke="#fff" stroke-width="1.3"/></svg>
<div class="t" style="left:85px;top:338.5px;color:#1a1a1a;letter-spacing:0.048px">me.mateusakino.ypul</div>
<svg style="left:69px;top:361px" width="7" height="11" viewBox="0 0 7 11"><path d="M1 1l4.5 4.5L1 10" stroke="#A4A4A4" stroke-width="1.6" fill="none"/></svg>
<svg style="left:83px;top:356px" width="16" height="16" viewBox="0 0 16 16"><path d="M3.5 1.5h7l3.5 3.5v10h-10.5z" fill="#F4F8FC" stroke="#A89058" stroke-width="1"/><path d="M10.5 1.5v3.5h3.5" fill="#F2E6B0" stroke="#C8B870" stroke-width="0.7"/><path d="M9.8 4.5v6.2a2.2 2.2 0 0 1-4.2 1" stroke="#2C5A9A" stroke-width="1.6" fill="none"/></svg>
<div class="t" style="left:104px;top:356.5px;color:#1a1a1a;letter-spacing:-0.116px">UnknownLanguageException.java</div>
<svg style="left:69px;top:379px" width="7" height="11" viewBox="0 0 7 11"><path d="M1 1l4.5 4.5L1 10" stroke="#A4A4A4" stroke-width="1.6" fill="none"/></svg>
<svg style="left:83px;top:374px" width="16" height="16" viewBox="0 0 16 16"><path d="M3.5 1.5h7l3.5 3.5v10h-10.5z" fill="#F4F8FC" stroke="#A89058" stroke-width="1"/><path d="M10.5 1.5v3.5h3.5" fill="#F2E6B0" stroke="#C8B870" stroke-width="0.7"/><path d="M9.8 4.5v6.2a2.2 2.2 0 0 1-4.2 1" stroke="#2C5A9A" stroke-width="1.6" fill="none"/><rect x="0" y="8" width="7.5" height="8" fill="#D0323E"/><path d="M1.8 10.3l3.9 3.9M5.7 10.3l-3.9 3.9" stroke="#fff" stroke-width="1.3"/></svg>
<div class="t" style="left:104px;top:374.5px;color:#1a1a1a;letter-spacing:-0.289px">yPuL.java</div>
<svg style="left:69px;top:397px" width="7" height="11" viewBox="0 0 7 11"><path d="M1 1l4.5 4.5L1 10" stroke="#A4A4A4" stroke-width="1.6" fill="none"/></svg>
<svg style="left:83px;top:392px" width="16" height="16" viewBox="0 0 16 16"><path d="M3.5 1.5h10.5v13.5h-10.5z" fill="#F4F8FC" stroke="#A89058" stroke-width="1"/><path d="M8.8 5v5.7a2 2 0 0 1-3.8 1" stroke="#2C5A9A" stroke-width="1.5" fill="none"/><path d="M9.5 6.5L11.8 0.5 14 6.5M10.3 4.5h3" stroke="#2E9A4A" stroke-width="0.9" fill="none"/><rect x="0" y="8" width="7.5" height="8" fill="#D0323E"/><path d="M1.8 10.3l3.9 3.9M5.7 10.3l-3.9 3.9" stroke="#fff" stroke-width="1.3"/></svg>
<div class="t" style="left:104px;top:392.5px;color:#1a1a1a;letter-spacing:-0.057px">yPuLCompiler.java</div>
<svg style="left:69px;top:415px" width="7" height="11" viewBox="0 0 7 11"><path d="M1 1l4.5 4.5L1 10" stroke="#A4A4A4" stroke-width="1.6" fill="none"/></svg>
<svg style="left:83px;top:410px" width="16" height="16" viewBox="0 0 16 16"><path d="M3.5 1.5h7l3.5 3.5v10h-10.5z" fill="#F4F8FC" stroke="#A89058" stroke-width="1"/><path d="M10.5 1.5v3.5h3.5" fill="#F2E6B0" stroke="#C8B870" stroke-width="0.7"/><path d="M9.8 4.5v6.2a2.2 2.2 0 0 1-4.2 1" stroke="#2C5A9A" stroke-width="1.6" fill="none"/><rect x="0" y="8" width="7.5" height="8" fill="#D0323E"/><path d="M1.8 10.3l3.9 3.9M5.7 10.3l-3.9 3.9" stroke="#fff" stroke-width="1.3"/></svg>
<div class="t" style="left:104px;top:410.5px;color:#1a1a1a;letter-spacing:-0.249px">yPuLTester.java</div>
<svg style="left:31px;top:433px" width="7" height="11" viewBox="0 0 7 11"><path d="M1 1l4.5 4.5L1 10" stroke="#A4A4A4" stroke-width="1.6" fill="none"/></svg>
<svg style="left:45px;top:428px" width="16" height="16" viewBox="0 0 16 16"><rect x="1" y="5" width="7" height="2.2" fill="#1F6F92"/><rect x="2" y="7.4" width="8" height="2.2" fill="#2F9A6E"/><rect x="1" y="10" width="9.5" height="3.8" fill="#D8782E" stroke="#9A4E1E" stroke-width="0.7"/><path d="M9.5 2.2l1.8-0.6 4.4 11.6-1.8 0.6z" fill="#EDB65A" stroke="#C88A2A" stroke-width="0.6"/><path d="M11 4.5l1.2-0.4M12 7.5l1.2-0.4M13 10.5l1.2-0.4" stroke="#B87A20" stroke-width="0.6"/></svg>
<div class="t" style="left:66px;top:428.5px;color:#1a1a1a;letter-spacing:-0.255px">Referenced Libraries</div>
<svg style="left:429px;top:81px" width="16" height="16" viewBox="0 0 16 16"><path d="M3.5 1.5h7l3.5 3.5v10h-10.5z" fill="#F4F8FC" stroke="#A89058" stroke-width="1"/><path d="M10.5 1.5v3.5h3.5" fill="#F2E6B0" stroke="#C8B870" stroke-width="0.7"/><path d="M9.8 4.5v6.2a2.2 2.2 0 0 1-4.2 1" stroke="#2C5A9A" stroke-width="1.6" fill="none"/><rect x="0" y="8" width="7.5" height="8" fill="#D0323E"/><path d="M1.8 10.3l3.9 3.9M5.7 10.3l-3.9 3.9" stroke="#fff" stroke-width="1.3"/></svg>
<div class="t" style="left:449px;top:81.5px;color:#222;letter-spacing:-0.2px">Test.java</div>
<svg style="left:502px;top:84px" width="10" height="10" viewBox="0 0 10 10"><path d="M0.5 2.3L2.3 0.5 5 3.2 7.7 0.5 9.5 2.3 6.8 5 9.5 7.7 7.7 9.5 5 6.8 2.3 9.5 0.5 7.7 3.2 5z" fill="#fff" stroke="#5A5A5A" stroke-width="1" stroke-linejoin="miter"/></svg>
<svg style="left:524px;top:81px" width="16" height="16" viewBox="0 0 16 16"><path d="M3.5 1.5h7l3.5 3.5v10h-10.5z" fill="#F4F8FC" stroke="#A89058" stroke-width="1"/><path d="M10.5 1.5v3.5h3.5" fill="#F2E6B0" stroke="#C8B870" stroke-width="0.7"/><path d="M9.8 4.5v6.2a2.2 2.2 0 0 1-4.2 1" stroke="#2C5A9A" stroke-width="1.6" fill="none"/></svg>
<div class="t" style="left:544px;top:81.5px;color:#222;letter-spacing:-0.2px">Test2.java</div>
<div class="a" style="left:427px;top:103px;width:12px;height:679px;background:#F8F8F8"></div>
<div class="a" style="left:439px;top:765px;width:24px;height:17px;background:#F8F8F8"></div>
<div class="a" style="left:465px;top:178px;width:865px;height:15px;background:#E8F2FE"></div>
<div class="m" style="left:431px;top:104.5px;width:22px;text-align:right;color:#787878">1</div>
<div class="m" style="left:431px;top:119.5px;width:22px;text-align:right;color:#787878">2</div>
<div class="m" style="left:431px;top:134.5px;width:22px;text-align:right;color:#787878">3</div>
<div class="m" style="left:431px;top:149.5px;width:22px;text-align:right;color:#787878">4</div>
<div class="m" style="left:431px;top:164.5px;width:22px;text-align:right;color:#787878">5</div>
<div class="m" style="left:431px;top:179.5px;width:22px;text-align:right;color:#787878">6</div>
<div class="m" style="left:431px;top:194.5px;width:22px;text-align:right;color:#787878">7</div>
<div class="m" style="left:431px;top:209.5px;width:22px;text-align:right;color:#787878">8</div>
<div class="m" style="left:431px;top:224.5px;width:22px;text-align:right;color:#787878">9</div>
<div class="m" style="left:431px;top:239.5px;width:22px;text-align:right;color:#787878">10</div>
<div class="m" style="left:431px;top:254.5px;width:22px;text-align:right;color:#787878">11</div>
<div class="m" style="left:431px;top:269.5px;width:22px;text-align:right;color:#787878">12</div>
<div class="m" style="left:465px;top:104.5px;color:#000"><span style="color:#7F0055;font-weight:bold">package</span> me.mateusakino.test;</div>
<div class="m" style="left:465px;top:134.5px;color:#000"><span style="color:#7F0055;font-weight:bold">import</span> me.mateusakino.test2.Test2;</div>
<div class="m" style="left:465px;top:164.5px;color:#000"><span style="color:#7F0055;font-weight:bold">public</span> <span style="color:#7F0055;font-weight:bold">class</span> Test {</div>
<div class="m" style="left:465px;top:179.5px;color:#000">    <span style="color:#7F0055;font-weight:bold">public</span> <span style="color:#7F0055;font-weight:bold">static</span> String <span style="color:#0000C0;font-style:italic">s</span> = <span style="color:#2A00FF">"eee"</span>;</div>
<div class="m" style="left:465px;top:194.5px;color:#000">    <span style="color:#7F0055;font-weight:bold">public</span> <span style="color:#7F0055;font-weight:bold">static</span> <span style="color:#7F0055;font-weight:bold">void</span> main(String <span style="color:#6A3E3E">args</span>[]) {</div>
<div class="m" style="left:465px;top:209.5px;color:#000">        Test2 <span style="color:#6A3E3E">test2</span> = <span style="color:#7F0055;font-weight:bold">new</span> Test2();</div>
<div class="m" style="left:465px;top:224.5px;color:#000">        <span style="color:#6A3E3E">test2</span>.test(<span style="color:#2A00FF">"test"</span>);</div>
<div class="m" style="left:465px;top:239.5px;color:#000">    }</div>
<div class="m" style="left:465px;top:254.5px;color:#000">}</div>
<svg style="left:592px;top:190px" width="42" height="3"><polyline points="0,2 2,0 4,2 6,0 8,2 10,0 12,2 14,0 16,2 18,0 20,2 22,0 24,2 26,0 28,2 30,0 32,2 34,0 36,2 38,0 40,2 42,0" fill="none" stroke="#E0303A" stroke-width="1"/></svg>
<svg style="left:661px;top:205px" width="42" height="3"><polyline points="0,2 2,0 4,2 6,0 8,2 10,0 12,2 14,0 16,2 18,0 20,2 22,0 24,2 26,0 28,2 30,0 32,2 34,0 36,2 38,0 40,2 42,0" fill="none" stroke="#E0303A" stroke-width="1"/></svg>
<svg style="left:563px;top:235px" width="28" height="3"><polyline points="0,2 2,0 4,2 6,0 8,2 10,0 12,2 14,0 16,2 18,0 20,2 22,0 24,2 26,0 28,2" fill="none" stroke="#E0303A" stroke-width="1"/></svg>
<svg style="left:427px;top:178px" width="13" height="15" viewBox="0 0 13 15"><defs><pattern id="chk" width="2" height="2" patternUnits="userSpaceOnUse"><rect width="2" height="2" fill="#fff"/><rect width="1" height="1" fill="#2A6FC0"/><rect x="1" y="1" width="1" height="1" fill="#2A6FC0"/></pattern></defs><rect width="13" height="15" fill="url(#chk)"/></svg>
<svg style="left:427px;top:178px" width="13" height="15" viewBox="0 0 13 15"><circle cx="4.5" cy="4.5" r="3.8" fill="#F6E08A" stroke="#D8B040" stroke-width="0.8"/><rect x="2.5" y="8" width="4" height="3" fill="#9AA0A8"/><rect x="5" y="6" width="7.5" height="8" fill="#D8343F"/><path d="M6.8 8.3l3.9 3.9M10.7 8.3l-3.9 3.9" stroke="#fff" stroke-width="1.3"/></svg>
<svg style="left:427px;top:193px" width="13" height="15" viewBox="0 0 13 15"><circle cx="4.5" cy="4.5" r="3.8" fill="#F6E08A" stroke="#D8B040" stroke-width="0.8"/><rect x="2.5" y="8" width="4" height="3" fill="#9AA0A8"/><rect x="5" y="6" width="7.5" height="8" fill="#D8343F"/><path d="M6.8 8.3l3.9 3.9M10.7 8.3l-3.9 3.9" stroke="#fff" stroke-width="1.3"/></svg>
<svg style="left:427px;top:223px" width="13" height="15" viewBox="0 0 13 15"><circle cx="4.5" cy="4.5" r="3.8" fill="#F6E08A" stroke="#D8B040" stroke-width="0.8"/><rect x="2.5" y="8" width="4" height="3" fill="#9AA0A8"/><rect x="5" y="6" width="7.5" height="8" fill="#D8343F"/><path d="M6.8 8.3l3.9 3.9M10.7 8.3l-3.9 3.9" stroke="#fff" stroke-width="1.3"/></svg>
<svg style="left:454px;top:195px" width="10" height="10" viewBox="0 0 10 10"><circle cx="4.5" cy="5" r="4" fill="#DDE6F2" stroke="#9AAAC0" stroke-width="0.8"/><path d="M2.3 5h4.4" stroke="#4A5A78" stroke-width="1"/></svg>
<div class="a" style="left:1331px;top:103px;width:15px;height:680px;background:linear-gradient(90deg,#EDEDED,#F1F1F1)"></div>
<div class="a" style="left:1346px;top:103px;width:14px;height:680px;background:#F7F7F7"></div>
<svg style="left:1334px;top:108px" width="9" height="7"><path d="M1 6l3.5-4L8 6" stroke="#A8A8A8" stroke-width="1.6" fill="none"/></svg>
<svg style="left:1334px;top:752px" width="9" height="7"><path d="M1 1l3.5 4L8 1" stroke="#A8A8A8" stroke-width="1.6" fill="none"/></svg>
<div class="a" style="left:1349px;top:107px;width:6px;height:6px;background:#F0007A;border:1px solid #5A5A5A"></div>
<div class="a" style="left:1347px;top:119px;width:12px;height:1px;background:#6A6A6A"></div>
<div class="a" style="left:1348px;top:183px;width:9px;height:3px;background:#F8C8DC;border:1px solid #E878A8"></div>
<div class="a" style="left:1348px;top:198px;width:9px;height:3px;background:#F8C8DC;border:1px solid #E878A8"></div>
<div class="a" style="left:1348px;top:228px;width:9px;height:3px;background:#F8C8DC;border:1px solid #E878A8"></div>
<div class="a" style="left:463px;top:765px;width:868px;height:17px;background:#EFEFEF"></div>
<svg style="left:467px;top:769px" width="7" height="9"><path d="M6 1L2 4.5 6 8" stroke="#A8A8A8" stroke-width="1.6" fill="none"/></svg>
<svg style="left:1318px;top:769px" width="7" height="9"><path d="M1 1l4 3.5L1 8" stroke="#A8A8A8" stroke-width="1.6" fill="none"/></svg>
<div class="a" style="left:786px;top:184px;width:228px;height:98px;border:1px solid #2F7272;background:#FFFFE6;box-shadow:2px 4px 10px rgba(0,0,0,0.28), 0 0 3px rgba(0,0,0,0.12)"></div>
<div class="a" style="left:787px;top:185px;width:228px;height:26px;background:linear-gradient(#F2FEFC,#FFFFEA 60%,#FFFFE4)"></div>
<div class="a" style="left:787px;top:211px;width:228px;height:1px;background:#8E8E7A"></div>
<div class="a" style="left:787px;top:258px;width:228px;height:1px;background:#8E8E7A"></div>
<div class="a" style="left:787px;top:259px;width:228px;height:23px;background:linear-gradient(#F4F4F0,#EEEEEE)"></div>
<svg style="left:791px;top:194px" width="13" height="14" viewBox="0 0 13 14"><circle cx="4.5" cy="4.5" r="3.8" fill="#FBEFB0" stroke="#E0B450" stroke-width="0.9"/><rect x="2.5" y="8" width="4" height="3.5" fill="#A8A8A8"/><rect x="5" y="6" width="7" height="7.5" fill="#D8343F"/><path d="M6.7 8.1l3.6 3.6M10.3 8.1l-3.6 3.6" stroke="#fff" stroke-width="1.2"/></svg>
<div class="t" style="left:806px;top:194px;color:#111;letter-spacing:-0.1px">The type java.lang.String is ambiguous</div>
<div class="a" style="left:929px;top:192px;width:1px;height:16px;background:#000"></div>
<div class="t" style="left:792px;top:215.5px;color:#111;letter-spacing:-0.1px">1 quick fix available:</div>
<svg style="left:800px;top:241px" width="13" height="8"><path d="M0.5 5.5L5 1.5v4z" fill="#2A5A8A"/><path d="M6 5.5h6" stroke="#4A6A9A" stroke-width="1"/></svg>
<div class="t" style="left:818px;top:237px;color:#0A64C8;letter-spacing:0px;text-decoration:underline;text-underline-offset:1px">Explicitly import 'java.lang.String'</div>
<svg style="left:791px;top:264px" width="16" height="15" viewBox="0 0 16 15"><path d="M5.5 0.5h6l3.5 3.5v10H5.5z" fill="#F4F6F8" stroke="#B0A890" stroke-width="0.8"/><path d="M6 9l2-3 2 3 2-4 2 3" stroke="#D84040" stroke-width="1" fill="none"/><circle cx="4.5" cy="10.5" r="4" fill="#4A5A8A"/><circle cx="4.5" cy="10.5" r="1.6" fill="#E8EAF0"/></svg>
<svg style="left:1003px;top:271px" width="10" height="10"><g fill="#9A9A9A"><rect x="8" y="0" width="2" height="2"/><rect x="4" y="4" width="2" height="2"/><rect x="8" y="4" width="2" height="2"/><rect x="0" y="8" width="2" height="2"/><rect x="4" y="8" width="2" height="2"/><rect x="8" y="8" width="2" height="2"/></g></svg>
<svg style="left:1375px;top:82px" width="12" height="15" viewBox="0 0 12 15"><path d="M0.5 0.5h11v14l-2.5-2H3l-2.5 2z" fill="#F0F0F4" stroke="#5A5A6A"/><path d="M0.8 11h10.4v3.2l-2.2-1.7H3l-2.2 1.7z" fill="#B8B0DA"/><path d="M2.5 3h7M2.5 5h7M2.5 7h7M2.5 9h7" stroke="#333" stroke-width="0.9"/></svg>
<div class="t" style="left:1392px;top:82px;color:#222;letter-spacing:-0.2px">Task List</div>
<svg style="left:1444px;top:84px" width="10" height="10" viewBox="0 0 10 10"><path d="M0.5 2.3L2.3 0.5 5 3.2 7.7 0.5 9.5 2.3 6.8 5 9.5 7.7 7.7 9.5 5 6.8 2.3 9.5 0.5 7.7 3.2 5z" fill="#fff" stroke="#555" stroke-width="1" stroke-linejoin="miter"/></svg>
<svg style="left:1421px;top:105px" width="16" height="16" viewBox="0 0 16 16"><path d="M1.5 4.5l2-2h7v12h-9z" fill="#F2F2F6" stroke="#7A7A8A"/><path d="M12 0.5l1.2 2.3 2.3 1.2-2.3 1.2L12 7.5l-1.2-2.3-2.3-1.2 2.3-1.2z" fill="#FFE680" stroke="#C9A33A" stroke-width="0.8"/></svg>
<svg style="left:1442px;top:112px" width="8" height="4"><path d="M0 0H8L4 4Z" fill="#1a1a1a"/></svg>
<div class="a" style="left:1455px;top:105px;width:1px;height:18px;background:#8A8A8A"></div>
<div class="a" style="left:1461px;top:103px;width:21px;height:20px;background:#CDE3FB;border:1px solid #B4D4F4"></div>
<svg style="left:1465px;top:106px" width="16" height="16" viewBox="0 0 16 16"><rect x="1" y="1.5" width="6" height="3" fill="#E8E0C0" stroke="#6A7A9A" stroke-width="0.8"/><path d="M4 4.5v9M4 8.5h3M4 12.5h3M9 3.5h6M9 8.5h5M9 12.5h5" stroke="#4A6A9A" stroke-width="1"/><rect x="6.5" y="7" width="2.5" height="3" fill="none" stroke="#4A6A9A" stroke-width="0.8"/><rect x="6.5" y="11" width="2.5" height="3" fill="none" stroke="#4A6A9A" stroke-width="0.8"/></svg>
<svg style="left:1487px;top:106px" width="16" height="16" viewBox="0 0 16 16"><circle cx="4" cy="4" r="3" fill="#fff" stroke="#4A5A7A" stroke-width="0.9"/><path d="M4 2.5v1.5h1.3" stroke="#4A5A7A" stroke-width="0.7"/><path d="M4 7v6.5M4 9.5h3M4 13h3M9 3.5h6M9 9.5h5M9 13h5" stroke="#4A6A9A" stroke-width="1"/><rect x="6.5" y="8" width="2.5" height="3" fill="none" stroke="#4A6A9A" stroke-width="0.8"/><rect x="6.5" y="11.5" width="2.5" height="3" fill="none" stroke="#4A6A9A" stroke-width="0.8"/></svg>
<div class="a" style="left:1510px;top:105px;width:1px;height:18px;background:#8A8A8A"></div>
<svg style="left:1519px;top:107px" width="15" height="14" viewBox="0 0 15 14"><circle cx="4" cy="4" r="3" fill="#B9B9B9"/><circle cx="10.5" cy="5" r="3" fill="#C8C8C8"/><circle cx="5" cy="10" r="3" fill="#8A86B8"/></svg>
<div class="a" style="left:1540px;top:105px;width:1px;height:18px;background:#8A8A8A"></div>
<svg style="left:1549px;top:106px" width="16" height="16" viewBox="0 0 16 16"><path d="M1.5 2L14.5 15" stroke="#22306A" stroke-width="1.3" fill="none"/><path d="M2 8.5L5.5 12 9.5 7" stroke="#22306A" stroke-width="1.2" fill="none"/></svg>
<svg style="left:1572px;top:106px" width="17" height="16" viewBox="0 0 17 16"><circle cx="4" cy="2.5" r="2" fill="#E0A030"/><path d="M1.5 5h5v5h-1v5h-3v-5h-1z" fill="#E8A83A"/><circle cx="10" cy="2.5" r="2" fill="#8AA0B8"/><path d="M7.5 5h5v5h-1v5h-3v-5h-1z" fill="#9AB0C8"/><path d="M5 1l11 14" stroke="#22306A" stroke-width="1.2"/></svg>
<svg style="left:1596px;top:107px" width="14" height="14" viewBox="0 0 14 14"><rect x="0.5" y="0.5" width="10" height="10" fill="#EEF2FA" stroke="#6A7CA0"/><rect x="3.5" y="3.5" width="10" height="10" fill="#F4F7FC" stroke="#6A7CA0"/><path d="M5.5 8.5h6" stroke="#2A4F8A" stroke-width="1.4"/></svg>
<div class="a" style="left:1618px;top:105px;width:1px;height:18px;background:#8A8A8A"></div>
<svg style="left:1626px;top:106px" width="16" height="16" viewBox="0 0 16 16"><ellipse cx="10" cy="3" rx="4.5" ry="2" fill="#7AA0D8" stroke="#3A5A9A" stroke-width="0.8"/><path d="M5.5 3v10c0 1 2 2 4.5 2s4.5-1 4.5-2V3" fill="#5A88D0" stroke="#3A5A9A" stroke-width="0.8"/><path d="M0.5 7l3-3 1 2.5h3v3h-3L4.5 12z" fill="#F8D060" stroke="#B8901A" stroke-width="0.7"/></svg>
<svg style="left:1657px;top:108px" width="11" height="7"><path d="M0.5 0.5h10L5.5 6z" fill="#fff" stroke="#555"/></svg>
<div class="a" style="left:1373px;top:130px;width:108px;height:18px;border:1px solid #A8A8A8;background:#fff"></div>
<div class="t" style="left:1384px;top:132.5px;color:#666">Find</div>
<svg style="left:1467px;top:134px" width="12" height="12" viewBox="0 0 12 12"><circle cx="4.5" cy="4.5" r="3.7" fill="#F4F6F8" stroke="#555" stroke-width="1"/><path d="M7.3 7.3l3.8 3.8" stroke="#444" stroke-width="1.8"/></svg>
<svg style="left:1497px;top:136px" width="5" height="9"><path d="M0 0l4.5 4.5L0 9z" fill="#222"/></svg>
<div class="t" style="left:1511px;top:133px;color:#2A64B8">All</div>
<svg style="left:1537px;top:136px" width="5" height="9"><path d="M0 0l4.5 4.5L0 9z" fill="#222"/></svg>
<div class="t" style="left:1551px;top:133px;color:#2A64B8;letter-spacing:-0.2px">Activate...</div>
<svg style="left:1660px;top:132px" width="15" height="15" viewBox="0 0 15 15"><circle cx="7.5" cy="7.5" r="6.5" fill="#fff" stroke="#2A6AB8" stroke-width="1.4"/><path d="M5.3 5.6a2.2 2.2 0 1 1 3 2c-.6.3-.8.7-.8 1.4" stroke="#2A6AB8" stroke-width="1.4" fill="none"/><circle cx="7.5" cy="11" r="0.9" fill="#2A6AB8"/></svg>
<div class="a" style="left:1370px;top:377px;width:308px;height:1px;background:#B4BCC8"></div>
<div class="a" style="left:1367px;top:378px;width:312px;height:50px;background:linear-gradient(#E2E7F0,#EEF1F7 45%,#F9FAFC 80%,#FDFDFE);border-radius:0 0 4px 6px"></div>
<svg style="left:1375px;top:383px" width="15" height="15" viewBox="0 0 15 15"><circle cx="7.5" cy="7.5" r="6.6" fill="#fff" stroke="#2A4A7A" stroke-width="1.1"/><circle cx="7.5" cy="4.2" r="0.9" fill="#2A4A7A"/><path d="M6 6.5h2v4.5M6 11h3.3" stroke="#2A4A7A" stroke-width="1.2" fill="none"/></svg>
<div class="t" style="left:1396px;top:384px;color:#1A70C8;font-weight:bold;font-size:13px;letter-spacing:-0.1px">Connect Mylyn</div>
<div class="a" style="left:1396px;top:400px;width:282px;height:22px;overflow:hidden"><div class="t" style="left:0;top:5.5px;color:#111;letter-spacing:0.02px"><span style="color:#1A64B8;text-decoration:underline">Connect</span> to your task and ALM tools or <span style="color:#1A64B8;text-decoration:underline">create</span> a local task</div></div>
<svg style="left:1373px;top:439px" width="14" height="15" viewBox="0 0 14 15"><rect x="0.5" y="0.5" width="5" height="5" fill="#C8DEF8" stroke="#2A5A9A"/><rect x="0.5" y="9.5" width="5" height="5" fill="#C8DEF8" stroke="#2A5A9A"/><path d="M7 2.5h6M9 7h4M7 12.5h6" stroke="#2A5A9A"/><rect x="7" y="6" width="2" height="2" fill="none" stroke="#2A5A9A" stroke-width="0.7"/></svg>
<div class="t" style="left:1391px;top:439px;color:#222;letter-spacing:0.3px">Outline</div>
<svg style="left:1439px;top:441px" width="10" height="10" viewBox="0 0 10 10"><path d="M0.5 2.3L2.3 0.5 5 3.2 7.7 0.5 9.5 2.3 6.8 5 9.5 7.7 7.7 9.5 5 6.8 2.3 9.5 0.5 7.7 3.2 5z" fill="#fff" stroke="#555" stroke-width="1" stroke-linejoin="miter"/></svg>
<div class="a" style="left:1485px;top:459px;width:187px;height:23px;background:#F5F5F7"></div>
<svg style="left:1490px;top:464px" width="15" height="14" viewBox="0 0 15 14"><circle cx="4" cy="4" r="3" fill="#C0C0C0"/><circle cx="10.5" cy="5" r="3" fill="#CACACA"/><circle cx="5" cy="10" r="3" fill="#A8A8A8"/></svg>
<svg style="left:1512px;top:464px" width="14" height="14" viewBox="0 0 14 14"><rect x="0.5" y="0.5" width="10" height="10" fill="#EEF2FA" stroke="#6A7CA0"/><rect x="3.5" y="3.5" width="10" height="10" fill="#F4F7FC" stroke="#6A7CA0"/><path d="M5.5 8.5h6" stroke="#2A4F8A" stroke-width="1.4"/></svg>
<svg style="left:1533px;top:462px" width="17" height="17" viewBox="0 0 17 17"><path d="M3 1v14M0.5 12.5L3 15.5 5.5 12.5" stroke="#3A4A6A" stroke-width="1.1" fill="none"/><text x="7" y="8" font-family="Liberation Sans" font-size="8" font-weight="bold" fill="#3A5A9A">a</text><text x="7" y="16.5" font-family="Liberation Sans" font-size="9" font-weight="bold" fill="#A83AA8">z</text></svg>
<svg style="left:1558px;top:463px" width="16" height="16" viewBox="0 0 16 16"><circle cx="7" cy="8" r="5" fill="#5A9AD8" stroke="#2A5A98"/><path d="M1 2l13 13" stroke="#1A2A6A" stroke-width="1.4"/></svg>
<svg style="left:1581px;top:461px" width="16" height="18" viewBox="0 0 16 18"><circle cx="6" cy="11" r="4" fill="#8A8A9A" stroke="#5A5A6A" stroke-width="0.8"/><path d="M1 5l10 12" stroke="#1A2A6A" stroke-width="1.3"/><text x="9.5" y="7" font-family="Liberation Sans" font-size="8" fill="#4A5A9A">S</text></svg>
<svg style="left:1606px;top:466px" width="10" height="10"><circle cx="4.5" cy="4.5" r="4" fill="#3A9A4A"/></svg>
<svg style="left:1628px;top:461px" width="16" height="18" viewBox="0 0 16 18"><circle cx="6" cy="11" r="4" fill="#8A8A9A" stroke="#5A5A6A" stroke-width="0.8"/><path d="M1 5l10 12" stroke="#1A2A6A" stroke-width="1.3"/><path d="M11 2v5h3" stroke="#3A4A6A" stroke-width="1" fill="none"/></svg>
<svg style="left:1657px;top:465px" width="11" height="7"><path d="M0.5 0.5h10L5.5 6z" fill="#fff" stroke="#555"/></svg>
<svg style="left:1398px;top:484px" width="16" height="16" viewBox="0 0 16 16"><rect x="3.5" y="3.5" width="10" height="10" fill="#D8D2A0" stroke="#9A9060" stroke-width="0.9"/><path d="M8.5 2v13M2.5 8.5h13" stroke="#6A6040" stroke-width="1"/></svg>
<div class="t" style="left:1425px;top:483.5px;color:#1a1a1a">me.mateusakino.test</div>
<svg style="left:1378px;top:507px" width="10" height="7" viewBox="0 0 10 7"><path d="M1 1l4 4 4-4" stroke="#333" stroke-width="1.7" fill="none"/></svg>
<svg style="left:1397px;top:501px" width="24" height="16" viewBox="0 0 24 16"><circle cx="8" cy="6.5" r="6" fill="#3A9A3A" stroke="#1F6A2C"/><circle cx="8" cy="6" r="4.3" fill="#5CB85C"/><path d="M10.2 4.2A3 3 0 1 0 10.2 8.8" stroke="#fff" stroke-width="1.6" fill="none"/><path d="M14 11l5 2.5-5 2.5z" fill="#3AA03A"/></svg>
<svg style="left:1397px;top:501px" width="16" height="16" viewBox="0 0 16 16"><rect x="0" y="8" width="7.5" height="8" fill="#D0323E"/><path d="M1.8 10.3l3.9 3.9M5.7 10.3l-3.9 3.9" stroke="#fff" stroke-width="1.3"/></svg>
<div class="t" style="left:1425px;top:501.5px;color:#1a1a1a">Test</div>
<div class="a" style="left:1421px;top:518px;width:76px;height:17px;background:#D9D9D9"></div>
<svg style="left:1421px;top:520px" width="16" height="16" viewBox="0 0 16 16"><circle cx="10.5" cy="7.5" r="2.6" fill="#fff" stroke="#3A9A3A" stroke-width="1.3"/><path d="M8.5 9.5l-3 3" stroke="#3A9A3A" stroke-width="1.2"/><rect x="0" y="8" width="7.5" height="8" fill="#D0323E"/><path d="M1.8 10.3l3.9 3.9M5.7 10.3l-3.9 3.9" stroke="#fff" stroke-width="1.3"/></svg>
<div class="t" style="left:1439px;top:516px;color:#B0205A;font-size:9px">S</div>
<div class="t" style="left:1450px;top:519.5px;color:#1a1a1a">s : String</div>
<svg style="left:1421px;top:538px" width="16" height="16" viewBox="0 0 16 16"><circle cx="10.5" cy="9" r="4" fill="#3A9A3A"/><circle cx="10" cy="8.5" r="2.5" fill="#5CC05C"/><rect x="0" y="8" width="7.5" height="8" fill="#D0323E"/><path d="M1.8 10.3l3.9 3.9M5.7 10.3l-3.9 3.9" stroke="#fff" stroke-width="1.3"/></svg>
<div class="t" style="left:1439px;top:534px;color:#B0205A;font-size:9px">S</div>
<div class="t" style="left:1450px;top:537.5px;color:#1a1a1a">main(String[])<span style="color:#95855A"> : void</span></div>
<svg style="left:428px;top:793px" width="14" height="16" viewBox="0 0 14 16"><path d="M5.5 0.5h7v14h-7z" fill="#F4F4F8" stroke="#7A7A8A" stroke-width="0.9"/><circle cx="4.5" cy="4.5" r="3.5" fill="#D83838"/><path d="M7 6l5 6" stroke="#3A5A9A" stroke-width="1.2"/><rect x="0" y="8.5" width="7" height="7.5" fill="#D8343F"/><path d="M1.7 10.3l3.6 3.9M5.3 10.3l-3.6 3.9" stroke="#fff" stroke-width="1.2"/></svg>
<div class="t" style="left:448px;top:795px;color:#222;letter-spacing:-0.2px">Problems</div>
<svg style="left:507px;top:796px" width="10" height="10" viewBox="0 0 10 10"><path d="M0.5 2.3L2.3 0.5 5 3.2 7.7 0.5 9.5 2.3 6.8 5 9.5 7.7 7.7 9.5 5 6.8 2.3 9.5 0.5 7.7 3.2 5z" fill="#fff" stroke="#555" stroke-width="1" stroke-linejoin="miter"/></svg>
<div class="t" style="left:531px;top:795px;color:#9AA4B8;font-size:11px">@</div>
<div class="t" style="left:548px;top:795px;color:#8A8A8A;letter-spacing:-0.2px">Javadoc</div>
<svg style="left:601px;top:793px" width="15" height="16" viewBox="0 0 15 16"><path d="M0.5 0.5h9l3 3v11h-12z" fill="#F8F8F4" stroke="#B8B8A8" stroke-width="0.9"/><path d="M3 4h5M3 6.5h6M3 9h4" stroke="#9AA4B8" stroke-width="0.9"/><path d="M7 11h5v-2l3 3.5-3 3.5v-2H7z" fill="#F0DC9A" stroke="#C8B070" stroke-width="0.7"/></svg>
<div class="t" style="left:620px;top:795px;color:#8A8A8A;letter-spacing:-0.2px">Declaration</div>
<svg style="left:1549px;top:794px" width="16" height="16" viewBox="0 0 16 16"><path d="M1 3.5h6M1 12.5h6M5 0.5v6M5 9.5v6" stroke="#2A3A5A" stroke-width="1"/><path d="M7 6h4V3.5L15 8l-4 4.5V10H7z" fill="#F8D060" stroke="#B8901A" stroke-width="0.8"/></svg>
<div class="a" style="left:1571px;top:792px;width:1px;height:18px;background:#8A8A8A"></div>
<svg style="left:1581px;top:795px" width="15" height="14" viewBox="0 0 15 14"><circle cx="4" cy="4" r="3" fill="#C0C0C0"/><circle cx="10.5" cy="5" r="3" fill="#CACACA"/><circle cx="5" cy="10" r="3" fill="#A8A8A8"/></svg>
<svg style="left:1612px;top:796px" width="11" height="7"><path d="M0.5 0.5h10L5.5 6z" fill="#fff" stroke="#555"/></svg>
<div class="t" style="left:427px;top:816.5px;color:#111;letter-spacing:-0.15px">16 errors, 1 warning, 0 others</div>
<div class="a" style="left:427px;top:831px;width:1250px;height:1px;background:#A0A0A0"></div>
<svg style="left:574px;top:833px" width="8" height="5"><path d="M0.5 4.5L4 1l3.5 3.5" stroke="#666" stroke-width="1" fill="none"/></svg>
<div class="t" style="left:433px;top:838px;color:#111;letter-spacing:-0.15px">Description</div>
<div class="t" style="left:733px;top:838px;color:#111;letter-spacing:-0.15px">Resource</div>
<div class="t" style="left:823px;top:838px;color:#111;letter-spacing:-0.15px">Path</div>
<div class="t" style="left:943px;top:838px;color:#111;letter-spacing:-0.15px">Location</div>
<div class="t" style="left:1033px;top:838px;color:#111;letter-spacing:-0.15px">Type</div>
<div class="a" style="left:427px;top:856px;width:299px;height:163px;background:#F7F7F7"></div>
<div class="a" style="left:427px;top:874px;width:1250px;height:1px;background:#E8E8E8"></div>
<div class="a" style="left:427px;top:892px;width:1250px;height:1px;background:#E8E8E8"></div>
<div class="a" style="left:427px;top:910px;width:1250px;height:1px;background:#E8E8E8"></div>
<div class="a" style="left:427px;top:928px;width:1250px;height:1px;background:#E8E8E8"></div>
<div class="a" style="left:427px;top:946px;width:1250px;height:1px;background:#E8E8E8"></div>
<div class="a" style="left:427px;top:964px;width:1250px;height:1px;background:#E8E8E8"></div>
<div class="a" style="left:427px;top:982px;width:1250px;height:1px;background:#E8E8E8"></div>
<div class="a" style="left:427px;top:1000px;width:1250px;height:1px;background:#E8E8E8"></div>
<div class="a" style="left:427px;top:1018px;width:1250px;height:1px;background:#E8E8E8"></div>
<div class="a" style="left:726px;top:832px;width:1px;height:188px;background:#E4E4E4"></div>
<div class="a" style="left:816px;top:832px;width:1px;height:188px;background:#E4E4E4"></div>
<div class="a" style="left:936px;top:832px;width:1px;height:188px;background:#E4E4E4"></div>
<div class="a" style="left:1026px;top:832px;width:1px;height:188px;background:#E4E4E4"></div>
<div class="a" style="left:1116px;top:832px;width:1px;height:188px;background:#E4E4E4"></div>
<svg style="left:434px;top:863px" width="7" height="11" viewBox="0 0 7 11"><path d="M1 1l4.5 4.5L1 10" stroke="#A4A4A4" stroke-width="1.6" fill="none"/></svg>
<svg style="left:452px;top:860px" width="12" height="12" viewBox="0 0 12 12"><circle cx="5.5" cy="5.5" r="5.2" fill="#D83A3A" stroke="#B82828" stroke-width="0.6"/><path d="M3.5 3.5l4 4M7.5 3.5l-4 4" stroke="#fff" stroke-width="1.3"/></svg>
<div class="t" style="left:470px;top:858.5px;color:#111;letter-spacing:-0.1px">Errors (16 items)</div>
<svg style="left:434px;top:881px" width="7" height="11" viewBox="0 0 7 11"><path d="M1 1l4.5 4.5L1 10" stroke="#A4A4A4" stroke-width="1.6" fill="none"/></svg>
<svg style="left:451px;top:878px" width="13" height="12" viewBox="0 0 13 12"><path d="M6.5 0.8L12.3 11.2H0.7z" fill="#F8C84A" stroke="#D8A030" stroke-width="0.9" stroke-linejoin="round"/><path d="M6.5 4v3.5" stroke="#3A3020" stroke-width="1.4"/><circle cx="6.5" cy="9.2" r="0.8" fill="#3A3020"/></svg>
<div class="t" style="left:470px;top:876.5px;color:#111;letter-spacing:-0.1px">Warnings (1 item)</div>
<div class="a" style="left:1097px;top:1024px;width:1px;height:21px;background:#9A9AA8"></div>
<div class="a" style="left:1201px;top:1024px;width:1px;height:21px;background:#9A9AA8"></div>
<div class="a" style="left:1299px;top:1024px;width:1px;height:21px;background:#9A9AA8"></div>
<div class="t" style="left:1105px;top:1028px;color:#111">Writable</div>
<div class="t" style="left:1209px;top:1028px;color:#111;letter-spacing:-0.2px">Smart Insert</div>
<div class="t" style="left:1307px;top:1028px;color:#111;letter-spacing:-0.5px">6 : 36</div>
<svg style="left:1395px;top:1028px" width="2" height="17"><rect y="0" width="2" height="2" fill="#9096A6"/><rect y="5" width="2" height="2" fill="#9096A6"/><rect y="10" width="2" height="2" fill="#9096A6"/><rect y="15" width="2" height="2" fill="#9096A6"/></svg>
</body></html>
